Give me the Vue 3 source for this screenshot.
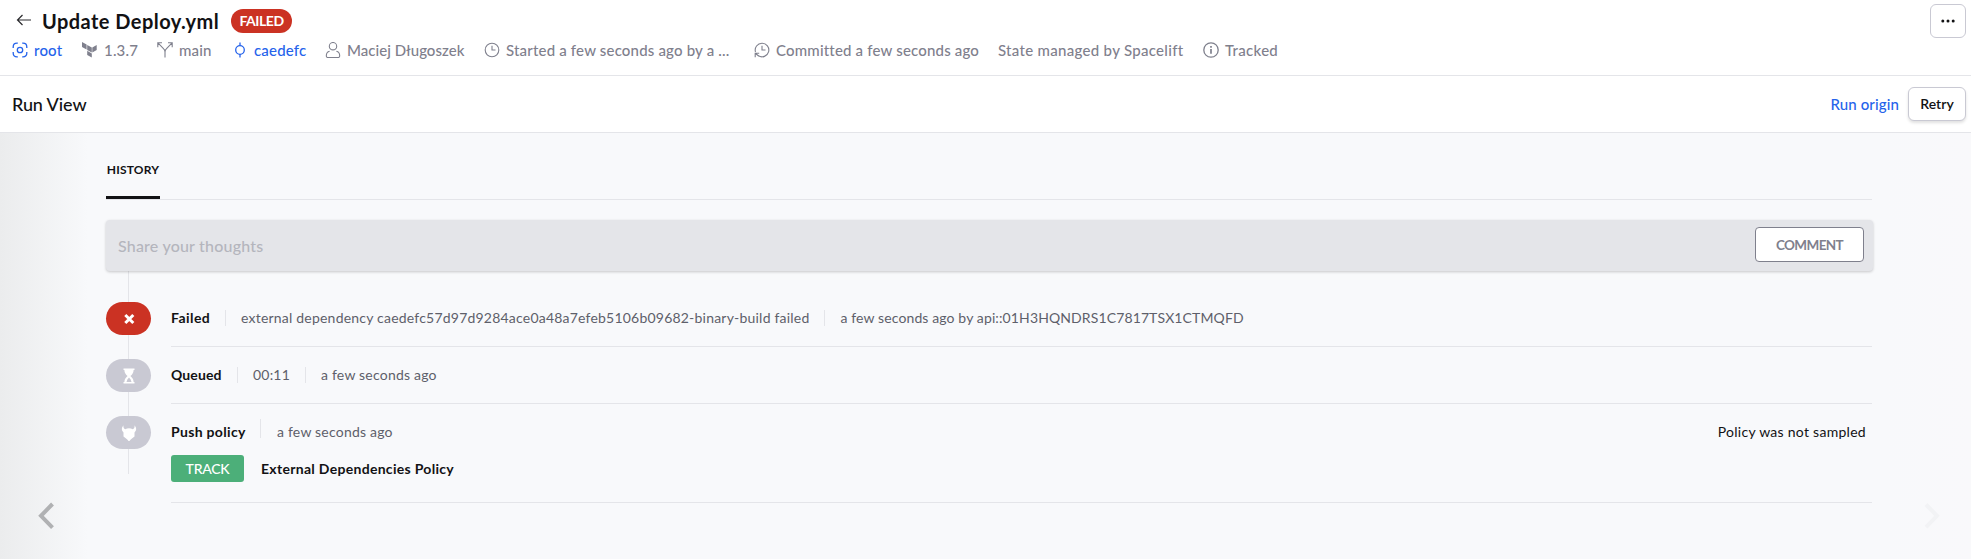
<script setup>
const meta = [
  { icon: 'root', text: 'root', link: true },
  { icon: 'terraform', text: '1.3.7' },
  { icon: 'branch', text: 'main' },
  { icon: 'commit', text: 'caedefc', link: true },
  { icon: 'user', text: 'Maciej Długoszek', cls: 'tight' },
  { icon: 'clock', text: 'Started a few seconds ago by a ...' },
  { icon: 'history', text: 'Committed a few seconds ago' },
  { text: 'State managed by Spacelift', cls: 'wide' },
  { icon: 'info', text: 'Tracked', cls: 'wide' },
]
</script>

<template>
  <div class="page">
    <header class="header">
      <div class="title-row">
        <svg class="back" viewBox="0 0 16 16"><path d="M15 8H2M6.500 3 1.500 8l5 5" fill="none" stroke="#2a2a2e" stroke-width="1.200" /></svg>
        <h1>Update Deploy.yml</h1>
        <span class="badge">FAILED</span>
        <button class="btn more">
          <svg viewBox="0 0 16 16" width="16" height="16"><circle cx="2.800" cy="8" r="1.500" /><circle cx="8" cy="8" r="1.500" /><circle cx="13.200" cy="8" r="1.500" /></svg>
        </button>
      </div>
      <div class="meta">
        <div v-for="m in meta" :key="m.text" class="item" :class="[m.cls, { link: m.link }]">
          <svg v-if="m.icon" class="ic" viewBox="0 0 16 16" fill="none" stroke="currentColor" stroke-width="1.1">
            <g v-if="m.icon === 'root'" stroke-width="1.3"><circle cx="8" cy="8" r="2.700" /><path d="M1.200 6V5Q1.200 1.200 5 1.200H5.800M10.200 1.200H11Q14.800 1.200 14.800 5V6M14.800 10v1q0 3.800-3.800 3.800h-.8M5.800 14.800H5Q1.200 14.800 1.200 11V10" /></g>
            <path v-else-if="m.icon === 'terraform'" d="M0 0 4.600 2.600v5L0 5ZM5.200 3 9.800 5.500v5.100L5.200 8.100ZM14.700 3v5.100l-4.400 2.500V5.500ZM5.200 8.800l4.600 2.600v4.100l-4.600-2.400Z" fill="currentColor" stroke="none" />
            <path v-else-if="m.icon === 'branch'" d="M8 15.500V10Q8 8 6.700 6.800L1.200 1.200M8 10Q8 8 9.300 6.800L14.800 1.200M.8 5.200V.8h4.200M11 .8h4.200v4.400" />
            <g v-else-if="m.icon === 'commit'" stroke-width="1.300"><circle cx="8" cy="8" r="4.300" /><path d="M8 .5v3.200M8 12.300v3.200" /></g>
            <g v-else-if="m.icon === 'user'"><circle cx="8" cy="4.200" r="3.700" /><path d="M4.600 9.200C2 9.700 1.300 11.600 1.300 14q0 1.500 1.500 1.500h10.400q1.500 0 1.500-1.500c0-2.400-.7-4.300-3.300-4.800" /></g>
            <g v-else-if="m.icon === 'clock'"><circle cx="8" cy="8" r="6.800" /><path d="M8 3.700V8h3.500" /></g>
            <g v-else-if="m.icon === 'history'"><path d="M1.500 10A6.800 6.800 0 1 1 4.400 13.800M8 3.700V8h3.500M1.200 15.300v-4h4M1.600 11.500l3 2.500" /></g>
            <g v-else><circle cx="8" cy="8" r="7.200" stroke-width="1.300" /><path d="M8 7v4.800M8 4.100v1.700" stroke-width="1.700" /></g>
          </svg>
          <span>{{ m.text }}</span>
        </div>
      </div>
    </header>

    <section class="bar">
      <h2>Run View</h2>
      <a class="origin">Run origin</a>
      <button class="btn retry">Retry</button>
    </section>

    <main class="main">
      <div class="content">
        <nav class="tabs"><span class="tab">HISTORY</span></nav>
        <div class="comment">
          <span class="ph">Share your thoughts</span>
          <button class="send">COMMENT</button>
        </div>

        <div class="timeline">
          <div class="row">
            <div class="rail">
              <span class="pill red"><svg viewBox="0 0 16 16"><path d="m4.300 4 8 8M12.300 4l-8 8" stroke="#fff" stroke-width="3" /></svg></span>
            </div>
            <div class="body">
              <div class="line">
                <b class="w-failed">Failed</b><i /><span>external dependency caedefc57d97d9284ace0a48a7efeb5106b09682-binary-build failed</span><i /><span class="api">a few seconds ago by api::01H3HQNDRS1C7817TSX1CTMQFD</span>
              </div>
            </div>
          </div>
          <div class="row">
            <div class="rail">
              <span class="pill"><svg viewBox="0 0 16 16"><path fill-rule="evenodd" fill="#fff" d="M2.500.500h11v1.400H12.600c0 3-1.500 4.600-3.200 6.100 1.700 1.500 3.200 3.100 3.200 6.100h.9v1.400h-11v-1.400h.9c0-3 1.500-4.600 3.200-6.100C4.900 6.500 3.400 4.900 3.400 1.900H2.500ZM5.500 13.900h5q-.5-2.900-2.500-4.500-2 1.600-2.500 4.500Z" /></svg></span>
            </div>
            <div class="body">
              <div class="line"><b class="w-queued">Queued</b><i /><span class="w-time">00:11</span><i /><span>a few seconds ago</span></div>
            </div>
          </div>
          <div class="row last">
            <div class="rail">
              <span class="pill"><svg viewBox="0 0 16 16"><path fill="#fff" d="M2.600.200C2.100 2 2.500 3.500 4.300 4.300 6.500 2.800 9.500 2.800 11.700 4.300 13.500 3.500 13.900 2 13.400.200c2.100 2.200 2.500 5.200.1 7.200v4L10 14.200 8 16.500 6 14.200 2.500 11.400v-4C.1 5.400.5 2.400 2.600.200Z" /></svg></span>
            </div>
            <div class="body">
              <div class="line"><b class="w-push">Push policy</b><i class="tall" /><span>a few seconds ago</span><span class="sampled">Policy was not sampled</span></div>
              <div class="policy"><span class="track">TRACK</span><b>External Dependencies Policy</b></div>
            </div>
          </div>
        </div>
      </div>
      <div class="edge left"><svg width="18" height="28" viewBox="0 0 18 28"><path d="M14.500 2 3 13.800l11.500 11.800" fill="none" stroke="#b0b1b3" stroke-width="4" /></svg></div>
      <div class="edge right"><svg width="18" height="28" viewBox="0 0 18 28"><path d="M3 2.500 14 13.800 3 25.100" fill="none" stroke="#f2f3f5" stroke-width="4" /></svg></div>
    </main>
  </div>
</template>

<style>
body { margin: 0; background: #f8f9fb; }
</style>
<style scoped>
.page { height: 559px; display: flex; flex-direction: column; overflow: hidden; font-family: Lato, "Noto Sans", sans-serif; color: #121214; }
.page * { box-sizing: border-box; white-space: nowrap; }
h1, h2 { margin: 0; }
.header { height: 76px; background: #fff; border-bottom: 1px solid #e4e5e9; }
.title-row { display: flex; align-items: center; height: 41px; padding: 1px 5px 0 0; }
.back { width: 16px; height: 16px; margin: 0 10px 2px 16px; }
h1 { font-size: 20px; line-height: 24px; font-weight: 700; letter-spacing: .45px; width: 189px; }
.badge { width: 61px; height: 24px; border-radius: 12px; background: #cb3223; color: #fff; font-size: 14px; line-height: 24px; font-weight: 700; letter-spacing: -.45px; text-align: center; }
.btn { padding: 0; background: #fff; border: 1px solid #c9c9d3; border-radius: 6px; height: 34px; font: 600 14px Lato, sans-serif; color: #121214; display: flex; align-items: center; justify-content: center; }
.more { width: 36px; margin-left: auto; }
.more svg { fill: #121214; }
.meta { display: grid; grid-template-columns: 70px 75px 75px 93px 159px 270px 244px 205px auto; margin-left: 12px; height: 18px; align-items: center; font-size: 15px; line-height: 18px; font-weight: 500; color: #7f808d; letter-spacing: .18px; }
.item { display: flex; align-items: center; gap: 6px; }
.ic { width: 16px; height: 16px; flex: none; }
.link, .origin { color: #2563eb; }
.tight { letter-spacing: .03px; }
.wide { letter-spacing: .3px; }
.bar { height: 57px; background: #fff; border-bottom: 1px solid #e4e5e9; display: flex; align-items: center; padding: 0 5px 0 12px; }
h2 { font-size: 18px; font-weight: 500; letter-spacing: -.1px; margin-right: auto; padding-bottom: 1px; }
.origin { font-size: 15px; font-weight: 500; letter-spacing: .12px; margin-right: 9px; }
.retry { width: 58px; padding-bottom: 1px; box-shadow: 0 2px 3px rgba(0, 0, 0, .12); }
.main { position: relative; flex: 1; background: #f8f9fb; }
.content { margin: 0 99px 0 106px; }
.tabs { height: 67px; display: flex; border-bottom: 1px solid #e4e5e9; }
.tab { width: 54px; height: 66px; padding-top: 30px; border-bottom: 3px solid #121214; font-size: 12px; line-height: 14px; font-weight: 700; letter-spacing: .2px; text-align: center; }
.comment { position: relative; margin-top: 20px; height: 51px; margin-right: -1px; border-radius: 4px; background: #e4e5e9; box-shadow: 0 1px 3px rgba(0, 0, 0, .2); display: flex; align-items: center; justify-content: space-between; padding: 0 9px 2px 12px; }
.ph { font-size: 16px; letter-spacing: .2px; color: #b4b5bd; font-weight: 500; padding-top: 1px; }
.send { width: 109px; height: 35px; padding: 0; border: 1px solid #7f808d; border-radius: 4px; background: #fff; color: #7f808d; font: 700 13.500px Lato, sans-serif; letter-spacing: -.6px; }
.timeline { padding-top: 19px; background: linear-gradient(#e4e5e9, #e4e5e9) 22px 0 / 1px 203px no-repeat; }
.row { display: flex; height: 57px; }
.rail { width: 65px; padding-top: 12px; }
.row.last { height: 99px; }
.pill { display: flex; align-items: center; justify-content: center; width: 45px; height: 33px; border-radius: 17px; background: #c9c9d3; }
.pill svg { width: 16px; height: 16px; }
.red { background: #cb3223; }
.body { flex: 1; border-bottom: 1px solid #e4e5e9; padding-top: 18px; }
.line { display: flex; align-items: center; height: 20px; font-size: 14px; line-height: 20px; color: #5e5f6a; letter-spacing: .21px; }
.line i { width: 1px; height: 16px; margin: 2px 15px; background: #e4e5e9; }
.line i.tall { height: 19px; margin: 0 16px 7px 15px; }
.line .api { letter-spacing: .12px; }
b { color: #121214; font-weight: 700; letter-spacing: .32px; }
.w-failed { width: 39px; letter-spacing: .45px; }
.w-queued { width: 51px; letter-spacing: .1px; }
.w-time { width: 37px; }
.w-push { width: 74px; }
.line .sampled { margin-left: auto; margin-right: 6px; color: #121214; letter-spacing: .28px; }
.policy { display: flex; align-items: center; margin-top: 13px; font-size: 14px; }
.track { width: 73px; height: 27px; border-radius: 3px; background: #4caf79; color: #fff; font-weight: 500; line-height: 27px; text-align: center; letter-spacing: -.25px; margin-right: 17px; }
.policy b { letter-spacing: .3px; }
.edge { position: absolute; top: 0; bottom: 0; width: 88px; }
.edge svg { position: absolute; top: 369px; }
.left { left: 0; background: linear-gradient(90deg, #ebeced, rgba(248, 249, 251, 0)); }
.left svg { left: 38px; }
.right { right: 0; background: linear-gradient(270deg, #f9f9fb, rgba(248, 249, 251, 0)); }
.right svg { right: 30px; }
</style>
